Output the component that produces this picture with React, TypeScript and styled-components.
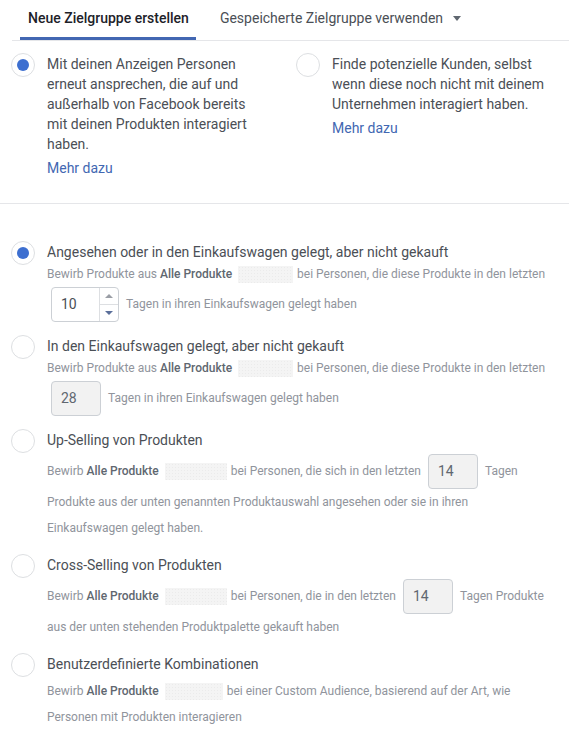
import React from 'react';
import styled, { createGlobalStyle } from 'styled-components';

const GlobalStyle = createGlobalStyle`
  body {
    margin: 0;
    background: #fff;
    font-family: Roboto, "Liberation Sans", Arial, sans-serif;
    -webkit-font-smoothing: antialiased;
  }
`;

const Page = styled.div`
  width: 569px;
  color: #4b4f56;
`;

const TabBar = styled.div`
  display: flex;
  margin-left: 12px;
  padding-left: 8px;
  border-bottom: 1px solid #e5e6e9;
`;

const Tab = styled.div<{ $active?: boolean }>`
  display: flex;
  align-items: flex-start;
  gap: 10px;
  box-sizing: border-box;
  height: 40px;
  padding: 9px 7px 0 8px;
  margin-right: 16px;
  font-size: 14px;
  line-height: 18px;
  font-weight: ${p => (p.$active ? 500 : 400)};
  color: ${p => (p.$active ? '#1d2129' : '#4b4f56')};
  border-bottom: 3px solid ${p => (p.$active ? '#4267b2' : 'transparent')};
`;

const Caret = styled.svg`
  margin-top: 7px;
`;

const Intro = styled.div`
  display: grid;
  grid-template-columns: 285px 1fr;
  padding: 12px 0 25px 11px;
  border-bottom: 1px solid #e5e6e9;
`;

const Choice = styled.div`
  display: flex;
  align-items: flex-start;
  gap: 12px;
`;

const Radio = styled.span<{ $checked?: boolean }>`
  flex: none;
  display: flex;
  align-items: center;
  justify-content: center;
  box-sizing: border-box;
  width: 24px;
  height: 24px;
  border-radius: 50%;
  border: 1px solid #dddfe2;
  background: #fff;

  &::after {
    content: '';
    display: ${p => (p.$checked ? 'block' : 'none')};
    width: 12px;
    height: 12px;
    border-radius: 50%;
    background: #3d6fd0;
  }
`;

const ChoiceText = styled.div`
  max-width: 218px;
  padding-top: 1px;
  font-size: 14px;
  line-height: 20px;
  color: #4b4f56;
`;

const Link = styled.a`
  display: block;
  margin-top: 4px;
  color: #4267b2;
  text-decoration: none;
  cursor: pointer;
`;

const Options = styled.div`
  padding: 37px 0 0 11px;
`;

const Option = styled.div`
  display: flex;
  align-items: flex-start;
  gap: 12px;
  margin-bottom: 13px;
`;

const OptionBody = styled.div`
  flex: 1;
  padding-top: 1px;
  white-space: nowrap;
`;

const Title = styled.div`
  font-size: 14px;
  line-height: 20px;
  color: #4b4f56;
`;

const Desc = styled.div<{ $offset?: number }>`
  margin-top: ${p => (p.$offset ?? -1)}px;
  font-size: 12px;
  line-height: 26px;
  color: #90949c;

  b {
    font-weight: 500;
    color: #606770;
  }
`;

const Redacted = styled.span<{ $w: number }>`
  display: inline-block;
  width: ${p => p.$w}px;
  height: 17px;
  margin: 0 1px 0 3px;
  vertical-align: middle;
  background-color: #f4f4f4;
  background-image: radial-gradient(#ebebeb 0.6px, transparent 0.7px);
  background-size: 3px 3px;
`;

const NumberBox = styled.span<{ $w: number; $disabled?: boolean }>`
  display: inline-flex;
  align-items: stretch;
  box-sizing: border-box;
  width: ${p => p.$w}px;
  height: 35px;
  margin: 0 7px 0 4px;
  vertical-align: middle;
  border: 1px solid #ccd0d5;
  border-radius: 4px;
  background: ${p => (p.$disabled ? '#f2f2f2' : '#fff')};
  font-size: 14px;
  line-height: 33px;
  color: ${p => (p.$disabled ? '#606770' : '#4b4f56')};
`;

const Value = styled.span`
  flex: 1;
  padding-left: 9px;
`;

const Spinner = styled.span`
  display: flex;
  flex-direction: column;
  width: 18px;
  border-left: 1px solid #dddfe2;
`;

const SpinHalf = styled.span<{ $down?: boolean }>`
  flex: 1;
  display: flex;
  align-items: center;
  justify-content: center;
  border-top: ${p => (p.$down ? '1px solid #dddfe2' : 'none')};

  &::after {
    content: '';
    border-left: 4px solid transparent;
    border-right: 4px solid transparent;
    ${p =>
      p.$down
        ? 'border-top: 4px solid #5b6f9a;'
        : 'border-bottom: 4px solid #9a9ea5;'}
  }
`;

const Number = ({ value, spinner, disabled }: { value: string; spinner?: boolean; disabled?: boolean }) => (
  <NumberBox $w={spinner ? 68 : 50} $disabled={disabled}>
    <Value>{value}</Value>
    {spinner && (
      <Spinner>
        <SpinHalf />
        <SpinHalf $down />
      </Spinner>
    )}
  </NumberBox>
);

export default function App() {
  return (
    <Page>
      <GlobalStyle />
      <TabBar>
        <Tab $active>Neue Zielgruppe erstellen</Tab>
        <Tab>
          Gespeicherte Zielgruppe verwenden
          <Caret width="8" height="5" viewBox="0 0 8 5">
            <path d="M0 0h8L4 5z" fill="#606770" />
          </Caret>
        </Tab>
      </TabBar>

      <Intro>
        <Choice>
          <Radio $checked />
          <ChoiceText>
            Mit deinen Anzeigen Personen erneut ansprechen, die auf und außerhalb von Facebook
            bereits mit deinen Produkten interagiert haben.
            <Link>Mehr dazu</Link>
          </ChoiceText>
        </Choice>
        <Choice>
          <Radio />
          <ChoiceText>
            Finde potenzielle Kunden, selbst wenn diese noch nicht mit deinem Unternehmen
            interagiert haben.
            <Link>Mehr dazu</Link>
          </ChoiceText>
        </Choice>
      </Intro>

      <Options>
        <Option>
          <Radio $checked />
          <OptionBody>
            <Title>Angesehen oder in den Einkaufswagen gelegt, aber nicht gekauft</Title>
            <Desc>
              Bewirb Produkte aus <b>Alle Produkte</b> <Redacted $w={55} /> bei Personen, die diese
              Produkte in den letzten
              <br />
              <Number value="10" spinner />
              Tagen in ihren Einkaufswagen gelegt haben
            </Desc>
          </OptionBody>
        </Option>

        <Option>
          <Radio />
          <OptionBody>
            <Title>In den Einkaufswagen gelegt, aber nicht gekauft</Title>
            <Desc>
              Bewirb Produkte aus <b>Alle Produkte</b> <Redacted $w={55} /> bei Personen, die diese
              Produkte in den letzten
              <br />
              <Number value="28" disabled />
              Tagen in ihren Einkaufswagen gelegt haben
            </Desc>
          </OptionBody>
        </Option>

        <Option>
          <Radio />
          <OptionBody>
            <Title>Up-Selling von Produkten</Title>
            <Desc $offset={4}>
              Bewirb <b>Alle Produkte</b> <Redacted $w={62} /> bei Personen, die sich in den letzten{' '}
              <Number value="14" disabled />
              Tagen
              <br />
              Produkte aus der unten genannten Produktauswahl angesehen oder sie in ihren
              <br />
              Einkaufswagen gelegt haben.
            </Desc>
          </OptionBody>
        </Option>

        <Option>
          <Radio />
          <OptionBody>
            <Title>Cross-Selling von Produkten</Title>
            <Desc $offset={4}>
              Bewirb <b>Alle Produkte</b> <Redacted $w={62} /> bei Personen, die in den letzten{' '}
              <Number value="14" disabled />
              Tagen Produkte
              <br />
              aus der unten stehenden Produktpalette gekauft haben
            </Desc>
          </OptionBody>
        </Option>

        <Option>
          <Radio />
          <OptionBody>
            <Title>Benutzerdefinierte Kombinationen</Title>
            <Desc $offset={4}>
              Bewirb <b>Alle Produkte</b> <Redacted $w={58} /> bei einer Custom Audience, basierend
              auf der Art, wie
              <br />
              Personen mit Produkten interagieren
            </Desc>
          </OptionBody>
        </Option>
      </Options>
    </Page>
  );
}
